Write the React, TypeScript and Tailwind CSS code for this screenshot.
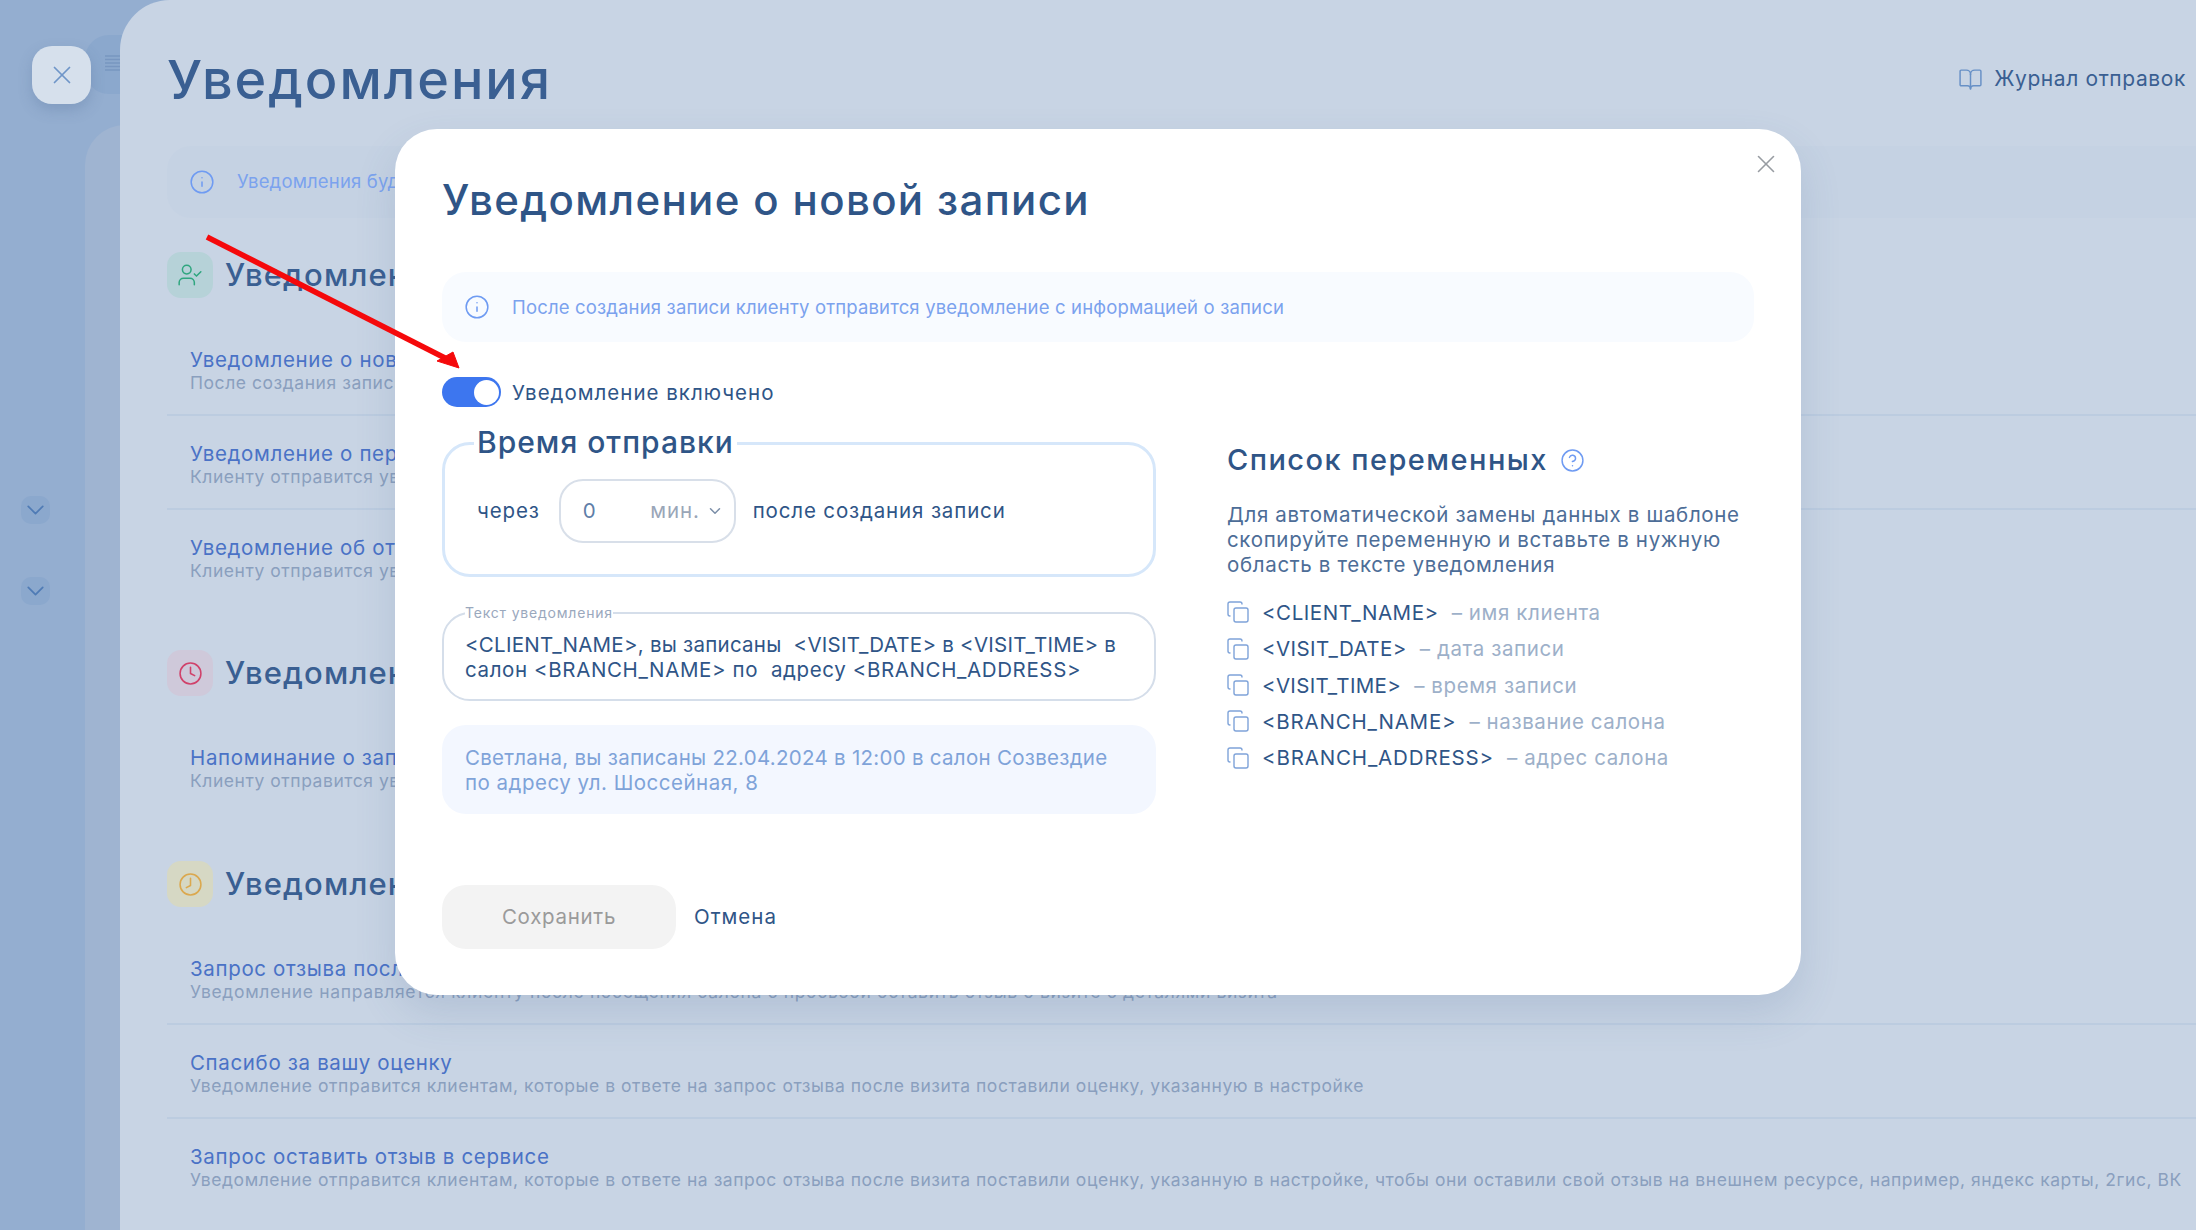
import { BookOpen, ChevronDown, CircleHelp, Clock, Copy, Info, UserCheck, X } from "lucide-react";

interface RowProps {
  title: string;
  desc: string;
  last?: boolean;
  wide?: boolean;
}

const Row = ({ title, desc, last, wide }: RowProps) => (
  <div className={last ? "h-[94px] pl-[23px] pt-[25.5px]" : "h-[94px] pl-[23px] pt-[25.5px] border-b-2 border-[#bccce0]"}>
    <div className="text-[20.5px] leading-[24px] tracking-[0.65px] text-[#4a72c6] whitespace-nowrap">{title}</div>
    <div
      className={
        wide
          ? "text-[17.5px] leading-[22px] tracking-[0.65px] text-[#8a9fbe] whitespace-nowrap"
          : "text-[17.5px] leading-[22px] tracking-[0.55px] text-[#8a9fbe] whitespace-nowrap"
      }
    >
      {desc}
    </div>
  </div>
);

const variables = [
  { code: "<CLIENT_NAME>", text: "– имя клиента", codeClass: "ml-[12px] tracking-[0.55px] text-[#2f5587]" },
  { code: "<VISIT_DATE>", text: "– дата записи", codeClass: "ml-[12px] tracking-[0.43px] text-[#2f5587]" },
  { code: "<VISIT_TIME>", text: "– время записи", codeClass: "ml-[12px] tracking-[0.32px] text-[#2f5587]" },
  { code: "<BRANCH_NAME>", text: "– название салона", codeClass: "ml-[12px] tracking-[0.8px] text-[#2f5587]" },
  { code: "<BRANCH_ADDRESS>", text: "– адрес салона", codeClass: "ml-[12px] tracking-[0.85px] text-[#2f5587]" },
];

function Modal() {
  return (
    <div className="absolute inset-0 flex justify-center items-start pt-[129px]">
      <div className="relative w-[1406px] h-[866px] bg-white rounded-[42px] px-[47px] pt-[46px] shadow-[0_18px_40px_rgba(70,100,145,0.16)]">
        <button className="absolute right-[20px] top-[20px] text-[#989ca2]">
          <X size={30} strokeWidth={1.3} />
        </button>
        <h2 className="h-[50px] text-[42px] leading-[50px] font-[450] tracking-[1.35px] text-[#2f5587]">
          Уведомление о новой записи
        </h2>
        <div className="mt-[47px] h-[70px] flex items-center bg-[#f8fbff] rounded-[24px] pl-[22px]">
          <Info size={26} strokeWidth={1.4} className="text-[#6f9bf2]" />
          <span className="ml-[22px] pt-[1px] text-[18.5px] tracking-[0.16px] text-[#7ba2ee]">
            После создания записи клиенту отправится уведомление с информацией о записи
          </span>
        </div>
        <div className="mt-[35px] h-[30px] flex items-center">
          <div className="w-[59px] h-[30px] rounded-full bg-[#3d76ef] flex items-center justify-end pr-[2px]">
            <div className="w-[25px] h-[25px] rounded-full bg-white" />
          </div>
          <span className="ml-[11px] pt-[2px] text-[20.5px] tracking-[1px] text-[#2f5587]">Уведомление включено</span>
        </div>
        <div className="flex mt-[16px]">
          <div className="w-[714px] shrink-0">
            <fieldset className="border-[3px] border-[#d6e7fa] rounded-[28px] px-[32px] pb-[31px]">
              <legend className="ml-[-3px] px-[3px] h-[40px] text-[30px] leading-[38px] font-[450] tracking-[1px] text-[#2f5587]">
                Время отправки
              </legend>
              <div className="mt-[16px] flex items-center text-[20.5px] tracking-[0.85px] text-[#2f5587]">
                <span>через</span>
                <div className="ml-[19px] w-[177px] h-[64px] border-2 border-[#d8dfe9] rounded-[24px] flex items-center pl-[22px] pr-[10px]">
                  <span className="text-[#5f7ea8]">0</span>
                  <span className="ml-auto text-[#9aa6b8]">мин.</span>
                  <ChevronDown size={18} className="ml-[6px] text-[#7b8ea8]" />
                </div>
                <span className="ml-[17px]">после создания записи</span>
              </div>
            </fieldset>
            <fieldset className="mt-[27px] border-2 border-[#d5deea] rounded-[28px] px-[21px] pb-[17px]">
              <legend className="h-[18px] text-[14px] leading-[18px] tracking-[0.8px] text-[#9aa8bd]">Текст уведомления</legend>
              <div className="mt-[10px] text-[20.5px] leading-[25px] text-[#2f5587] whitespace-pre">
                <div className="tracking-[0.25px]">{"<CLIENT_NAME>, вы записаны  <VISIT_DATE> в <VISIT_TIME> в"}</div>
                <div className="tracking-[0.62px]">{"салон <BRANCH_NAME> по  адресу <BRANCH_ADDRESS>"}</div>
              </div>
            </fieldset>
            <div className="mt-[24px] h-[89px] bg-[#f3f7ff] rounded-[24px] px-[23px] flex flex-col justify-center text-[20.5px] leading-[25px] text-[#7fa3d9] whitespace-pre">
              <div className="tracking-[0.28px]">Светлана, вы записаны 22.04.2024 в 12:00 в салон Созвездие</div>
              <div className="tracking-[0.5px]">по адресу ул. Шоссейная, 8</div>
            </div>
            <div className="mt-[71px] flex items-center">
              <button className="w-[234px] h-[64px] rounded-[24px] bg-[#f3f3f3] text-[20.5px] tracking-[0.7px] text-[#9a9a9a]">
                Сохранить
              </button>
              <button className="ml-[18px] text-[20.5px] tracking-[1px] text-[#2f5587]">Отмена</button>
            </div>
          </div>
          <div className="ml-[71px] flex-1 pt-[19px]">
            <div className="h-[36px] flex items-center">
              <span className="text-[29px] font-[450] tracking-[1.45px] text-[#2f5587]">Список переменных</span>
              <CircleHelp size={25} strokeWidth={1.4} className="ml-[12px] text-[#6f9bf2]" />
            </div>
            <p className="mt-[24px] text-[20.5px] leading-[25px] tracking-[0.66px] text-[#4d6d97] whitespace-pre">
              {"Для автоматической замены данных в шаблоне\nскопируйте переменную и вставьте в нужную\nобласть в тексте уведомления"}
            </p>
            <div className="mt-[18px]">
              {variables.map((v) => (
                <div key={v.code} className="h-[36.4px] flex items-center text-[20.5px]">
                  <Copy size={24} strokeWidth={1.4} className="-mt-[2px] -ml-[1px] text-[#7fa3d9]" />
                  <span className={v.codeClass}>{v.code}</span>
                  <span className="ml-[13px] tracking-[0.6px] text-[#9db0c9]">{v.text}</span>
                </div>
              ))}
            </div>
          </div>
        </div>
      </div>
    </div>
  );
}

export default function App() {
  return (
    <div className="relative w-[2196px] h-[1230px] overflow-hidden flex bg-[#94aed0] [font-family:Inter,sans-serif]">
      {/* sidebar, behind the backdrop */}
      <div className="relative w-[120px] shrink-0">
        <div className="absolute left-[85px] top-[35px] w-[60px] h-[59px] rounded-[24px] bg-[#8ba8cd]">
          <svg className="absolute left-[20px] top-[20px] text-[#7896c0]" width="15" height="17" viewBox="0 0 15 17" stroke="currentColor" strokeWidth="1.4">
            <path d="M0 1h15M0 4.5h15M0 8h15M0 11.5h15M0 15h15" />
          </svg>
        </div>
        <div className="absolute left-[85px] top-[125px] w-[60px] h-[1105px] rounded-tl-[40px] bg-[#9fb4d1]" />
        <div className="absolute left-[32px] top-[46px] w-[59px] h-[58px] rounded-[20px] bg-[#d6e0ec] shadow-[0_6px_14px_rgba(70,100,145,0.25)] flex items-center justify-center text-[#6f95c8]">
          <X size={30} strokeWidth={1.4} />
        </div>
        <div className="absolute left-[21px] top-[496px] w-[29px] h-[28px] rounded-[10px] bg-[#8ba8cd] flex items-center justify-center text-[#4f7bb5]">
          <ChevronDown size={30} strokeWidth={1.4} />
        </div>
        <div className="absolute left-[21px] top-[577px] w-[29px] h-[28px] rounded-[10px] bg-[#8ba8cd] flex items-center justify-center text-[#4f7bb5]">
          <ChevronDown size={30} strokeWidth={1.4} />
        </div>
      </div>

      {/* page */}
      <div className="relative flex-1 rounded-tl-[50px] bg-[#c8d4e4] pl-[47px] overflow-hidden">
        <div className="h-[146px] flex items-start justify-between pr-[10px]">
          <h1 className="mt-[50px] text-[54px] leading-[60px] font-[450] tracking-[1.95px] text-[#3a5f92]">Уведомления</h1>
          <div className="mt-[64px] flex items-center h-[30px] text-[21px] tracking-[0.6px] text-[#3a5f92]">
            <BookOpen size={25} strokeWidth={1.4} className="text-[#6790c6]" />
            <span className="ml-[11px]">Журнал отправок</span>
          </div>
        </div>
        <div className="h-[72px] bg-[#c5d2e3] rounded-l-[24px] flex items-center pl-[22px]">
          <Info size={26} strokeWidth={1.4} className="text-[#6f9bf2]" />
          <span className="ml-[22px] text-[18.5px] tracking-[0.16px] text-[#7ba2ee]">
            Уведомления будут отправляться клиентам, у которых указан номер телефона
          </span>
        </div>

        <div className="mt-[34px] h-[46px] flex items-center">
          <div className="w-[46px] h-[46px] rounded-[14px] bg-[#b6d2d8] flex items-center justify-center text-[#2fa67f]">
            <UserCheck size={26} strokeWidth={1.4} />
          </div>
          <span className="ml-[12px] text-[31px] font-[450] tracking-[1.1px] text-[#3a5f92]">Уведомления о записи</span>
        </div>
        <div className="mt-[24px]">
          <Row title="Уведомление о новой записи" desc="После создания записи клиенту отправится уведомление" />
          <Row title="Уведомление о переносе записи" desc="Клиенту отправится уведомление о переносе записи" />
          <Row title="Уведомление об отмене записи" desc="Клиенту отправится уведомление об отмене записи" last />
        </div>

        <div className="mt-[46px] h-[46px] flex items-center">
          <div className="w-[46px] h-[46px] rounded-[14px] bg-[#cfc9da] flex items-center justify-center text-[#d0416a]">
            <Clock size={25} strokeWidth={1.5} />
          </div>
          <span className="ml-[12px] text-[31px] font-[450] tracking-[1.1px] text-[#3a5f92]">Уведомления о визите</span>
        </div>
        <div className="mt-[24px]">
          <Row title="Напоминание о записи" desc="Клиенту отправится уведомление о предстоящем визите" last />
        </div>

        <div className="mt-[47px] h-[46px] flex items-center">
          <div className="w-[46px] h-[46px] rounded-[14px] bg-[#d6d8c4] flex items-center justify-center text-[#dba84e]">
            <svg width="25" height="25" viewBox="0 0 24 24" fill="none" stroke="currentColor" strokeWidth="1.5" strokeLinecap="round" strokeLinejoin="round">
              <circle cx="12" cy="12" r="10" />
              <path d="M12 6v7l-4 2" />
            </svg>
          </div>
          <span className="ml-[12px] text-[31px] font-[450] tracking-[1.1px] text-[#3a5f92]">Уведомления после визита</span>
        </div>
        <div className="mt-[24px]">
          <Row
            title="Запрос отзыва после визита"
            desc="Уведомление направляется клиенту после посещения салона с просьбой оставить отзыв о визите с деталями визита"
            wide
          />
          <Row
            title="Спасибо за вашу оценку"
            desc="Уведомление отправится клиентам, которые в ответе на запрос отзыва после визита поставили оценку, указанную в настройке"
          />
          <Row
            title="Запрос оставить отзыв в сервисе"
            desc="Уведомление отправится клиентам, которые в ответе на запрос отзыва после визита поставили оценку, указанную в настройке, чтобы они оставили свой отзыв на внешнем ресурсе, например, яндекс карты, 2гис, ВК"
            last
          />
        </div>
      </div>

      <Modal />

      {/* red arrow drawn on top of the screenshot */}
      <svg className="absolute left-0 top-0 pointer-events-none" width="480" height="380" viewBox="0 0 480 380">
        <path d="M207 237 L445 358" stroke="#f5090b" strokeWidth="5.5" fill="none" />
        <path d="M459 368 L437 361 L453 352 Z" fill="#f5090b" stroke="#f5090b" strokeWidth="1" />
      </svg>
    </div>
  );
}
